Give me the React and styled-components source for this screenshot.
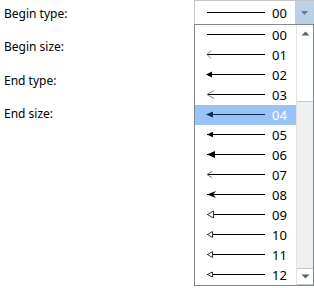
import React from "react";
import styled, { createGlobalStyle } from "styled-components";

const GlobalStyle = createGlobalStyle`
  html, body { margin: 0; padding: 0; background: #fff; }
  body { font-family: "Noto Sans", "Open Sans", Arial, sans-serif; color: #000; }
`;

const Page = styled.div`
  display: flex;
  width: 314px;
  height: 288px;
  overflow: hidden;
`;

const LabelColumn = styled.div`
  width: 190px;
  padding: 6px 0 0 4px;
  display: flex;
  flex-direction: column;
  gap: 17.33px;
`;

const Label = styled.div`
  font-size: 12px;
  line-height: 16px;
`;

const ComboWrap = styled.div`
  position: relative;
  width: 120px;
  height: 25px;
`;

const ComboBox = styled.div`
  box-sizing: border-box;
  display: flex;
  height: 25px;
  border: 1px solid #c4c4c4;
  border-right: none;
`;

const ComboValue = styled.div`
  flex: 1;
  display: flex;
  align-items: center;
  padding-left: 5px;
`;

const DropButton = styled.div`
  width: 19px;
  background: #bcd0e8;
  display: flex;
  align-items: center;
  justify-content: center;
`;

const Digits = styled.span`
  margin-left: 6px;
  font-size: 13px;
  line-height: 20px;
  color: ${(p) => (p.$selected ? "#fff" : "#000")};
`;

const List = styled.div`
  position: absolute;
  top: 24px;
  left: 0;
  box-sizing: border-box;
  width: 120px;
  height: 262px;
  border: 1px solid #828790;
  background: #fff;
  display: flex;
`;

const Items = styled.div`
  flex: 1;
  display: flex;
  flex-direction: column;
`;

const Item = styled.div`
  height: 20px;
  display: flex;
  align-items: center;
  padding-left: 5px;
  background: ${(p) => (p.$selected ? "#99c2f6" : "transparent")};
`;

const Scrollbar = styled.div`
  width: 17px;
  background: #f0f0f0;
  display: flex;
  flex-direction: column;
  border-left: 1px solid #e2e2e2;
  box-sizing: border-box;
`;

const ScrollButton = styled.div`
  height: 17px;
  background: #fff;
  display: flex;
  align-items: center;
  justify-content: center;
  box-sizing: border-box;
  ${(p) => (p.$bottom ? "margin-top: auto; border: 1px solid #c8c8c8; border-left: none; border-right: none;" : "")}
`;

const Thumb = styled.div`
  height: 60px;
  background: #fff;
  box-sizing: border-box;
  border-bottom: 1px solid #c8c8c8;
`;

const Tri = ({ up }) => (
  <svg width="9" height="5" viewBox="0 0 9 5">
    {up ? (
      <path d="M0.5 4.5 L4.5 0.5 L8.5 4.5 Z" fill="#606060" />
    ) : (
      <path d="M0.5 0.5 L8.5 0.5 L4.5 4.5 Z" fill="#606060" />
    )}
  </svg>
);

const heads = {
  "00": null,
  "01": <path d="M11 5.5 L7 9.5 L11 13.5" fill="none" stroke="#888" strokeWidth="1" />,
  "02": <path d="M6 9.5 L12 6.5 L12 12.5 Z" fill="#000" />,
  "03": <path d="M14 5.5 L7 9.5 L14 13.5" fill="none" stroke="#888" strokeWidth="1" />,
  "04": <path d="M6 9.5 L13 6.5 L13 12.5 Z" fill="currentColor" />,
  "05": <path d="M7 9.5 L13 6.8 L13 12.2 Z" fill="#000" />,
  "06": <path d="M7 9.5 L15 6 L15 13 Z" fill="#000" />,
  "07": <path d="M12 6.5 L7 9.5 L12 12.5" fill="none" stroke="#777" strokeWidth="1" />,
  "08": <path d="M7 9.5 L16 6 L13 9.5 L16 13 Z" fill="#000" />,
  "09": <path d="M7.5 9.5 L13.5 6 L13.5 13 Z" fill="#fff" stroke="#333" strokeWidth="1" />,
  "10": <path d="M7.5 9.5 L12.5 6.5 L12.5 12.5 Z" fill="#fff" stroke="#333" strokeWidth="1" />,
  "11": <path d="M7.5 9.5 L12.5 6.5 L12.5 12.5 Z" fill="#fff" stroke="#333" strokeWidth="1" />,
  "12": <path d="M7.5 9.5 L12.5 7 L12.5 12 Z" fill="#fff" stroke="#333" strokeWidth="1" />,
};

const LineIcon = ({ id, selected }) => (
  <svg
    width="66"
    height="20"
    viewBox="0 0 66 20"
    style={{ color: selected ? "#0b2d50" : "#000", display: "block" }}
  >
    <line x1="7" y1="9.5" x2="65" y2="9.5" stroke="currentColor" strokeWidth="1" />
    {heads[id]}
  </svg>
);

const ids = ["00", "01", "02", "03", "04", "05", "06", "07", "08", "09", "10", "11", "12"];

export default function App() {
  return (
    <>
      <GlobalStyle />
      <Page>
        <LabelColumn>
          <Label>Begin type:</Label>
          <Label>Begin size:</Label>
          <Label>End type:</Label>
          <Label>End size:</Label>
        </LabelColumn>
        <ComboWrap>
          <ComboBox>
            <ComboValue>
              <LineIcon id="00" />
              <Digits>00</Digits>
            </ComboValue>
            <DropButton>
              <svg width="7" height="4" viewBox="0 0 7 4">
                <path d="M0 0 L7 0 L3.5 4 Z" fill="#6b7b8f" />
              </svg>
            </DropButton>
          </ComboBox>
          <List>
            <Items>
              {ids.map((id) => (
                <Item key={id} $selected={id === "04"}>
                  <LineIcon id={id} selected={id === "04"} />
                  <Digits $selected={id === "04"}>{id}</Digits>
                </Item>
              ))}
            </Items>
            <Scrollbar>
              <ScrollButton>
                <Tri up />
              </ScrollButton>
              <Thumb />
              <ScrollButton $bottom>
                <Tri />
              </ScrollButton>
            </Scrollbar>
          </List>
        </ComboWrap>
      </Page>
    </>
  );
}
